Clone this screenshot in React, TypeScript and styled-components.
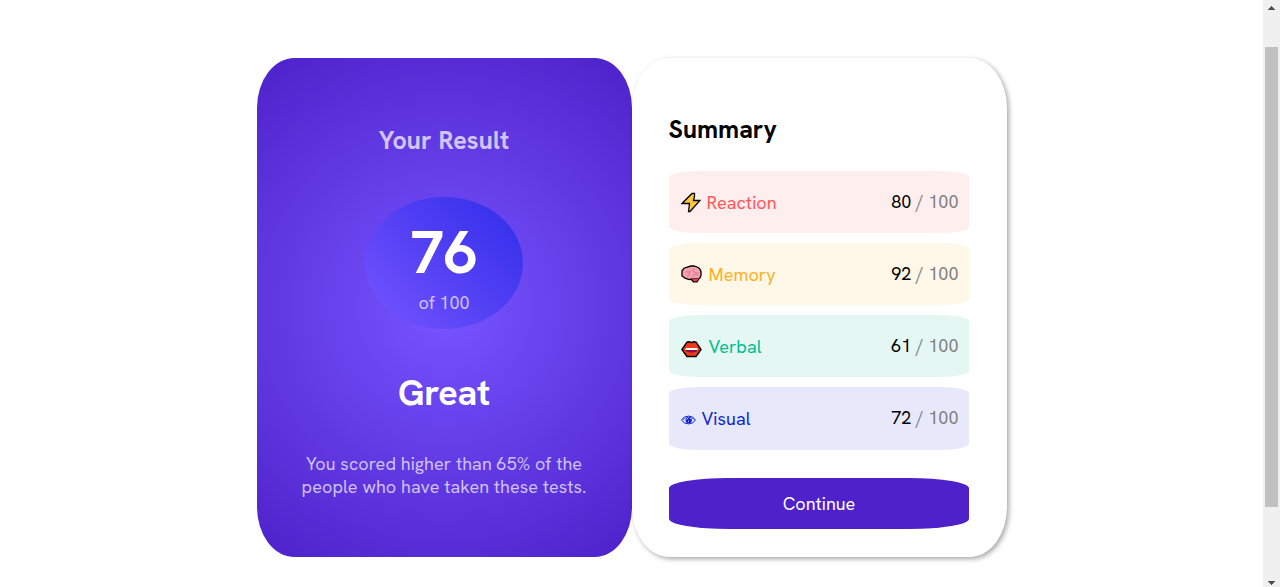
import React from "react";
import styled, { createGlobalStyle } from "styled-components";

const GlobalStyle = createGlobalStyle`
  * { box-sizing: border-box; }
  body {
    margin: 0;
    overflow: hidden;
    background: #fff;
    color: #000;
    font-family: "HK Grotesk", "Hanken Grotesk", Lato, sans-serif;
    font-size: 18px;
  }
  h1, h2, h3, p { margin: 0; }
`;

const Page = styled.div`
  display: flex;
  height: 587px;
`;

const Main = styled.main`
  flex: 1;
  display: flex;
  justify-content: center;
  align-items: flex-start;
  padding-top: 58px;
`;

const Card = styled.section`
  width: 375px;
  height: 499px;
  border-radius: 10%;
`;

const ResultCard = styled(Card)`
  display: flex;
  flex-direction: column;
  align-items: center;
  padding-top: 67px;
  background: radial-gradient(circle, #7755ff, #4e21ca);
  color: #fff;
  text-align: center;
`;

const ResultTitle = styled.h2`
  font-size: 25px;
  line-height: 32px;
  letter-spacing: 0.1px;
  color: #d2c5f6;
`;

const ScoreDisc = styled.div`
  width: 158px;
  height: 132px;
  margin-top: 40px;
  padding-top: 19px;
  border-radius: 50%;
  background: linear-gradient(45deg, #7755ff, #2f2ce9);
`;

const Score = styled.div`
  font-size: 60px;
  font-weight: 700;
  line-height: 72px;
`;

const ScoreTotal = styled.div`
  line-height: 24px;
  margin-top: 3px;
  color: #cdc6fb;
`;

const Verdict = styled.h1`
  margin-top: 40px;
  font-size: 36px;
  line-height: 48px;
  letter-spacing: -0.2px;
`;

const ResultText = styled.p`
  margin-top: 35px;
  line-height: 23px;
  letter-spacing: 0.06px;
  white-space: nowrap;
  color: #cfc2f5;
`;

const SummaryCard = styled(Card)`
  padding: 56px 38px 0 37px;
  box-shadow: 2px 2px 5px rgba(0, 0, 0, 0.35);
`;

const SummaryTitle = styled.h2`
  font-size: 25px;
  line-height: 32px;
`;

const Rows = styled.div`
  display: grid;
  gap: 10px;
  margin-top: 25px;
`;

const Row = styled.div<{ $tint: string }>`
  display: flex;
  justify-content: space-between;
  align-items: center;
  height: 62px;
  padding: 0 10px 0 12px;
  border-radius: 10%;
  background: ${(p) => p.$tint};

  &:last-child {
    height: 63px;
  }
`;

const Category = styled.div<{ $color: string; $gap: number }>`
  display: flex;
  align-items: center;
  gap: ${(p) => p.$gap}px;
  color: ${(p) => p.$color};
  letter-spacing: 0.05px;
`;

const Points = styled.div`
  padding-bottom: 2px;
  color: #808080;
`;

const Value = styled.span`
  color: #000;
`;

const ContinueButton = styled.button`
  display: block;
  width: 100%;
  height: 51px;
  margin-top: 28px;
  padding: 0 0 0 1px;
  border: 0;
  border-radius: 20%;
  background: #4e21ca;
  color: #fff;
  font: inherit;
`;

const ScrollTrack = styled.div`
  display: flex;
  flex-direction: column;
  align-items: center;
  width: 17px;
  background: #f0f0f0;
`;

const ScrollThumb = styled.div`
  width: 13px;
  height: 460px;
  margin: 32px 0 65px;
  background: #c1c1c1;
`;

const Bolt = () => (
  <svg width="20" height="22" viewBox="0 0 20 22">
    <path d="M13.5 2.5H11L1 12.5h7.5l-1 8H9l10-11h-6.5l1-4z" fill="#ffc83d" stroke="#000" strokeWidth="1.3" />
  </svg>
);

const Brain = () => (
  <svg width="21" height="18" viewBox="0 0 21 18">
    <path d="M9.5 13.5 12.5 16.8H16l2.5-4z" fill="#e0404c" stroke="#000" strokeWidth="1.3" />
    <path d="M1 6 3 3.2 7 1.8 10 1h3l3 1 2.5 1.5L20 6.5v4l-1.5 3-8 .6-2 .4-4-1.2L1 11z" fill="#f3a1b0" stroke="#000" strokeWidth="1.3" />
    <path d="m11 13.8 7-.6-2.2 3h-3z" fill="#e0404c" />
    <path d="M4.5 7h4l1.5-2M8.5 7v3L6 11M13 3l-1 3 3 2h3M11.5 11l2.5-2 3 1.5" fill="none" stroke="#dc7188" strokeWidth=".9" />
  </svg>
);

const Lips = () => (
  <svg width="21" height="24" viewBox="0 -6 21 24">
    <path d="M1 9.5 6 2.2l2.5-.5 2 1 2-1 2.5.5 5 7.3-3.5 5-1.5 2H6l-1.5-2z" fill="#f03a17" stroke="#000" strokeWidth="1.4" />
    <path d="M3.5 9.5h14L15 11.8l-4.5 1-4.5-1z" fill="#8e0a48" />
    <path d="M4 10 5 8h11l1 2z" fill="#fff" />
  </svg>
);

const Eye = () => (
  <svg width="15" height="12" viewBox="0 -2 15 12">
    <path d="M.6 5Q2.5 1.1 7.5 1.1T14.4 5Q12.5 8.9 7.5 8.9T.6 5z" fill="none" stroke="#1125d6" strokeWidth="1" />
    <circle cx="7.7" cy="5" r="3.2" fill="#1125d6" />
    <path d="m5.4 4.5 2-2M7 6.2h1M9.5 3v1" stroke="#e7e8fa" />
    <path d="M2 4.5 4 3.5M11 2.5l2 2" stroke="#1125d6" strokeWidth=".8" />
  </svg>
);

const Arrow = ({ down = false }: { down?: boolean }) => (
  <svg width="17" height="15" viewBox="0 0 17 15" shapeRendering="crispEdges">
    <path d={down ? "M5 9h7v1h-1v1h-1v1H9v1H8v-1H7v-1H6v-1H5z" : "M8 6h1v1h1v1h1v1h1v1H5V9h1V8h1V7h1z"} fill="#505050" />
  </svg>
);

const categories = [
  { name: "Reaction", value: 80, color: "#ff5757", tint: "#ffeeee", gap: 6, Icon: Bolt },
  { name: "Memory", value: 92, color: "#ffb01f", tint: "#fff7e8", gap: 7, Icon: Brain },
  { name: "Verbal", value: 61, color: "#00bd91", tint: "#e5f7f3", gap: 7, Icon: Lips },
  { name: "Visual", value: 72, color: "#1125d6", tint: "#e7e8fa", gap: 6, Icon: Eye },
];

export default function App() {
  return (
    <>
      <GlobalStyle />
      <Page>
        <Main>
          <ResultCard>
            <ResultTitle>Your Result</ResultTitle>
            <ScoreDisc>
              <Score>76</Score>
              <ScoreTotal>of 100</ScoreTotal>
            </ScoreDisc>
            <Verdict>Great</Verdict>
            <ResultText>
              You scored higher than 65% of the
              <br />
              people who have taken these tests.
            </ResultText>
          </ResultCard>
          <SummaryCard>
            <SummaryTitle>Summary</SummaryTitle>
            <Rows>
              {categories.map(({ name, value, color, tint, gap, Icon }) => (
                <Row key={name} $tint={tint}>
                  <Category $color={color} $gap={gap}>
                    <Icon />
                    {name}
                  </Category>
                  <Points>
                    <Value>{value}</Value> / 100
                  </Points>
                </Row>
              ))}
            </Rows>
            <ContinueButton>Continue</ContinueButton>
          </SummaryCard>
        </Main>
        <ScrollTrack>
          <Arrow />
          <ScrollThumb />
          <Arrow down />
        </ScrollTrack>
      </Page>
    </>
  );
}
